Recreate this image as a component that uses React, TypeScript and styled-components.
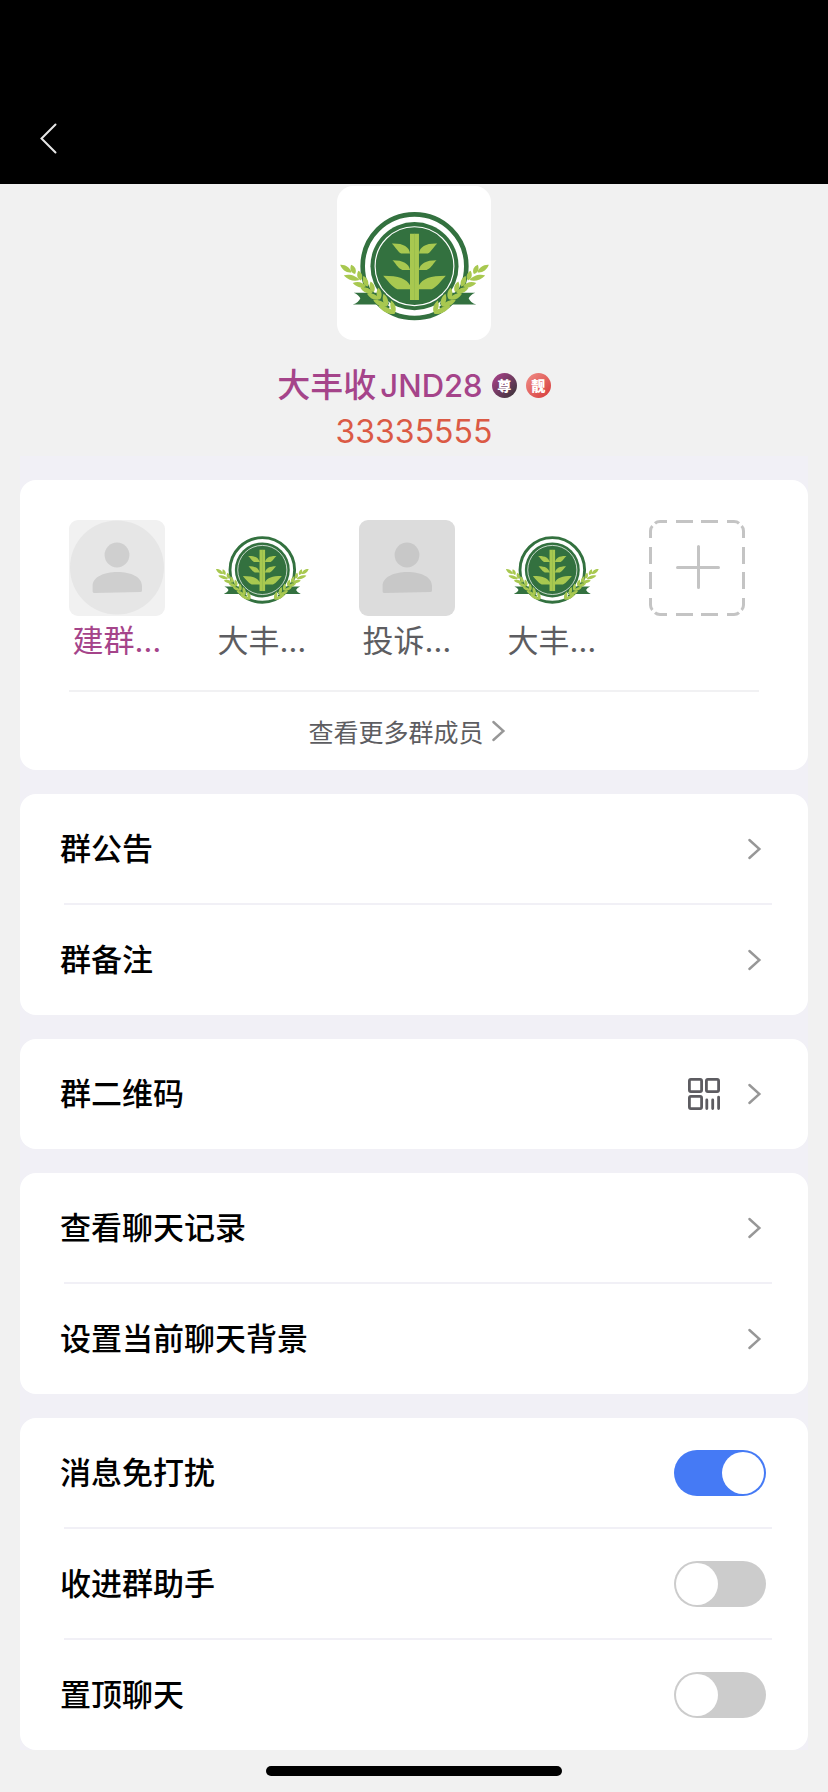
import React, { useState } from "react";
import styled, { createGlobalStyle } from "styled-components";

const GlobalStyle = createGlobalStyle`
  *, *::before, *::after { box-sizing: border-box; }
  body {
    margin: 0;
    background: #f1f1f1;
    color: #000;
    font-family: Inter, "Noto Sans CJK SC", sans-serif;
  }
  button {
    margin: 0;
    padding: 0;
    border: 0;
    background: none;
    color: inherit;
    font: inherit;
    cursor: pointer;
  }
  ul { margin: 0; padding: 0; list-style: none; }
  svg { display: block; }
`;

const Page = styled.div`
  display: flex;
  flex-direction: column;
`;

const Header = styled.header`
  display: flex;
  align-items: flex-end;
  height: 184px;
  background: #000;
`;

const BackButton = styled.button`
  display: flex;
  align-items: center;
  justify-content: center;
  width: 96px;
  height: 92px;
`;

const Hero = styled.section`
  display: flex;
  flex-direction: column;
  align-items: center;
  padding-top: 2px;
`;

const GroupAvatar = styled.div`
  width: 154px;
  height: 154px;
  margin-bottom: 23px;
  border-radius: 16px;
  background: #fff;
  overflow: hidden;
`;

const NameRow = styled.div`
  display: flex;
  align-items: center;
  gap: 9px;
`;

const GroupName = styled.h1`
  display: flex;
  align-items: baseline;
  gap: 4px;
  margin: 0;
  font-size: 33px;
  font-weight: 500;
  line-height: 44px;
  color: #a5448a;
`;

const LatinName = styled.span`
  font-size: 31px;
`;

const Badge = styled.span<{ $from: string; $to: string }>`
  display: flex;
  align-items: center;
  justify-content: center;
  width: 25px;
  height: 25px;
  border-radius: 50%;
  background: linear-gradient(135deg, ${(p) => p.$from}, ${(p) => p.$to});
  color: #fff;
  font-size: 14px;
  font-weight: 900;
  font-style: oblique 6deg;
  line-height: 25px;
`;

const GroupNumber = styled.p`
  margin: 0;
  font-size: 32px;
  font-weight: 400;
  line-height: 48px;
  color: #db5a45;
`;

const Settings = styled.main`
  display: flex;
  flex-direction: column;
  gap: 24px;
  margin: 0 20px;
  padding-top: 24px;
  background: #f1f0f6;
`;

const Card = styled.section`
  border-radius: 16px;
  background: #fff;
`;

const Members = styled.ul`
  display: flex;
  justify-content: space-between;
  padding: 40px 63px 29px 49px;
`;

const MemberButton = styled.button`
  display: flex;
  flex-direction: column;
  gap: 5px;
  width: 96px;
`;

const MemberAvatar = styled.span`
  width: 96px;
  height: 96px;
  border-radius: 9px;
  overflow: hidden;
`;

const MemberName = styled.span<{ $owner?: boolean }>`
  width: 100%;
  font-size: 31px;
  line-height: 40px;
  text-align: center;
  white-space: nowrap;
  color: ${(p) => (p.$owner ? "#a5448a" : "#5d5d61")};
`;

const MembersDivider = styled.div`
  height: 2px;
  margin: 0 49px;
  background: #f1f1f3;
`;

const MoreButton = styled.button`
  display: flex;
  align-items: center;
  justify-content: center;
  gap: 2px;
  width: 100%;
  height: 78px;
  padding-right: 10px;
  font-size: 25px;
  color: #5d5d61;
`;

const rowLayout = `
  display: flex;
  align-items: center;
  width: 100%;
  height: 110px;
  padding: 0 42px 0 40px;
  font-size: 31px;
  font-weight: 500;
  line-height: 44px;
  text-align: left;
  cursor: pointer;
`;

const RowItem = styled.li`
  & + &::before {
    content: "";
    display: block;
    height: 2px;
    margin: -1px 36px 0 44px;
    background: #f1f0f6;
  }
`;

const RowButton = styled.button`
  ${rowLayout}
`;

const RowLabel = styled.label`
  ${rowLayout}
`;

const RowText = styled.span`
  flex: 1;
`;

const RowIcon = styled.span`
  margin-right: 22px;
`;

const Switch = styled.input`
  appearance: none;
  display: flex;
  flex: none;
  width: 92px;
  height: 46px;
  margin: 0;
  padding: 2px;
  border-radius: 23px;
  background: #ccc;
  cursor: pointer;

  &::before {
    content: "";
    width: 42px;
    height: 42px;
    border-radius: 50%;
    background: #fff;
  }

  &:checked {
    justify-content: flex-end;
    background: #457af5;
  }
`;

const HomeIndicator = styled.div`
  align-self: center;
  width: 296px;
  height: 10px;
  margin: 16px 0;
  border-radius: 5px;
  background: #000;
`;

const Chevron = () => (
  <svg width="24" height="24" viewBox="0 0 24 24" fill="none" stroke="#979797" strokeWidth="2.4" aria-hidden="true">
    <path d="M7.4 3 L17.4 12 L7.4 21" strokeLinecap="round" />
  </svg>
);

const BackIcon = () => (
  <svg width="32" height="32" viewBox="0 0 32 32" fill="none" stroke="#e6e6e6" strokeWidth="2" aria-hidden="true">
    <path d="M23.5 2.5 L9.5 16.5 L23.5 30.5" strokeLinecap="round" />
  </svg>
);

const QrIcon = () => (
  <svg width="32" height="32" viewBox="0 0 32 32" fill="none" stroke="#5d5c61" strokeWidth="2.8" aria-hidden="true">
    <rect x="1.4" y="1.4" width="12.2" height="12.2" rx="1.5" />
    <rect x="18.4" y="1.4" width="12.2" height="12.2" rx="1.5" />
    <rect x="1.4" y="18.4" width="12.2" height="12.2" rx="1.5" />
    <path d="M18.8 22 V30.6 M24.7 22 V30.6 M30.6 19.2 V30.6" strokeLinecap="round" />
  </svg>
);

type Point = [number, number];

/* Lens-shaped wheat leaf running from its stem point to its tip. */
const leaf = ([x1, y1]: Point, [x2, y2]: Point, spread: number) => {
  const dx = x2 - x1;
  const dy = y2 - y1;
  const len = Math.hypot(dx, dy);
  const nx = (-dy / len) * spread;
  const ny = (dx / len) * spread;
  const p = (t: number, s: number) => `${(x1 + dx * t + nx * s).toFixed(1)} ${(y1 + dy * t + ny * s).toFixed(1)}`;
  return `M${x1} ${y1} C${p(0.25, 1)} ${p(0.65, 1)} ${x2} ${y2} C${p(0.7, -1)} ${p(0.25, -1)} ${x1} ${y1}Z`;
};

const wheat: [Point, Point][] = [
  [[343, 403], [354, 364]],
  [[366, 381], [377, 343]],
  [[388, 361], [393, 325]],
  [[407, 339], [416, 306]],
  [[425, 322], [438, 290]],
  [[445, 303], [453, 274]],
  [[463, 284], [475, 256]],
  [[343, 404], [392, 381]],
  [[367, 382], [408, 363]],
  [[390, 360], [427, 343]],
  [[410, 340], [447, 325]],
  [[430, 321], [470, 311]],
  [[450, 302], [497, 288]],
  [[474, 279], [508, 256]],
];
const wheatPath = wheat.map(([a, b]) => leaf(a, b, 10)).join("");

const EmblemHalf = ({ mirrored }: { mirrored?: boolean }) => (
  <g transform={mirrored ? "translate(567 0) scale(-1 1)" : undefined}>
    <path fill="#33713f" d="M372 340 H467 Q452 346 447 357 Q452 370 470 376 H360Z" />
    <path stroke="#33713f" strokeWidth="12" fill="none" d="M362 388 Q400 352 440 316" />
    <path fill="#a8c850" d={wheatPath} />
    <path
      fill="#a8c850"
      d="M283 162 H297 V222 C300 201 318 191 352 192 C343 198 338 212 324 222 H297 V272 C300 252 318 242 350 242 C341 250 336 264 320 272 H297 V318 C308 298 330 289 378 289 C364 304 352 322 335 330 H297 V362 H283Z"
    />
  </g>
);

const Emblem = () => (
  <svg width="100%" height="100%" viewBox="51 18 462 465" role="img" aria-label="大丰收">
    <circle cx="283.5" cy="260" r="156.5" fill="#fff" stroke="#33713f" strokeWidth="14" />
    <circle cx="283.5" cy="260" r="133" fill="#33713f" />
    <circle cx="283.5" cy="260" r="119" fill="none" stroke="#fff" strokeWidth="3.5" />
    <EmblemHalf />
    <EmblemHalf mirrored />
  </svg>
);

const PersonAvatar = ({ round }: { round?: boolean }) => (
  <svg width="96" height="96" viewBox="0 0 96 96" aria-hidden="true">
    <rect width="96" height="96" fill={round ? "#f1f1f1" : "#dcdcdc"} />
    {round && <circle cx="48" cy="47.5" r="47" fill="#e6e6e6" />}
    <g fill={round ? "#cfcfcf" : "#c8c8c8"}>
      <circle cx="48" cy="35" r="12.4" />
      <path d="M23.6 66 C23.6 57 35 52 48.4 52 C62 52 73 57 73 66 V70.5 Q73 72 71.2 72 L25.5 73 Q23.6 73 23.6 71.5Z" />
    </g>
  </svg>
);

const AddTile = () => (
  <svg width="96" height="96" viewBox="0 0 96 96" fill="none" stroke="#c4c4c4" strokeWidth="3" aria-hidden="true">
    {[0, 90, 180, 270].map((angle) => (
      <g key={angle} transform={`rotate(${angle} 48 48)`}>
        <path d="M6 3.4 Q8 1.5 11 1.5 H18 M27 1.5 H44 M52 1.5 H69 M78 1.5 H85 Q88 1.5 90 3.4" />
      </g>
    ))}
    <path d="M49.5 26.5 V67.5 M28.5 47.5 H69.5" strokeLinecap="round" />
  </svg>
);

const members = [
  { id: 1, name: "建群…", owner: true, avatar: <PersonAvatar round /> },
  { id: 2, name: "大丰…", avatar: <Emblem /> },
  { id: 3, name: "投诉…", avatar: <PersonAvatar /> },
  { id: 4, name: "大丰…", avatar: <Emblem /> },
];

const LinkRow = ({ text, icon }: { text: string; icon?: React.ReactNode }) => (
  <RowItem>
    <RowButton type="button">
      <RowText>{text}</RowText>
      {icon && <RowIcon>{icon}</RowIcon>}
      <Chevron />
    </RowButton>
  </RowItem>
);

const SwitchRow = ({ text, initial = false }: { text: string; initial?: boolean }) => {
  const [on, setOn] = useState(initial);
  return (
    <RowItem>
      <RowLabel>
        <RowText>{text}</RowText>
        <Switch type="checkbox" role="switch" checked={on} onChange={(e) => setOn(e.target.checked)} />
      </RowLabel>
    </RowItem>
  );
};

export default function App() {
  return (
    <Page>
      <GlobalStyle />
      <Header>
        <BackButton type="button" aria-label="返回">
          <BackIcon />
        </BackButton>
      </Header>

      <Hero>
        <GroupAvatar>
          <Emblem />
        </GroupAvatar>
        <NameRow>
          <GroupName>
            大丰收<LatinName>JND28</LatinName>
          </GroupName>
          <Badge $from="#b0428f" $to="#333333">尊</Badge>
          <Badge $from="#f08f88" $to="#d63a3a">靓</Badge>
        </NameRow>
        <GroupNumber>33335555</GroupNumber>
      </Hero>

      <Settings>
        <Card>
          <Members>
            {members.map((m) => (
              <li key={m.id}>
                <MemberButton type="button">
                  <MemberAvatar>{m.avatar}</MemberAvatar>
                  <MemberName $owner={m.owner}>{m.name}</MemberName>
                </MemberButton>
              </li>
            ))}
            <li>
              <MemberButton type="button" aria-label="添加成员">
                <AddTile />
              </MemberButton>
            </li>
          </Members>
          <MembersDivider />
          <MoreButton type="button">
            查看更多群成员
            <Chevron />
          </MoreButton>
        </Card>

        <Card as="ul">
          <LinkRow text="群公告" />
          <LinkRow text="群备注" />
        </Card>

        <Card as="ul">
          <LinkRow text="群二维码" icon={<QrIcon />} />
        </Card>

        <Card as="ul">
          <LinkRow text="查看聊天记录" />
          <LinkRow text="设置当前聊天背景" />
        </Card>

        <Card as="ul">
          <SwitchRow text="消息免打扰" initial />
          <SwitchRow text="收进群助手" />
          <SwitchRow text="置顶聊天" />
        </Card>
      </Settings>

      <HomeIndicator />
    </Page>
  );
}
